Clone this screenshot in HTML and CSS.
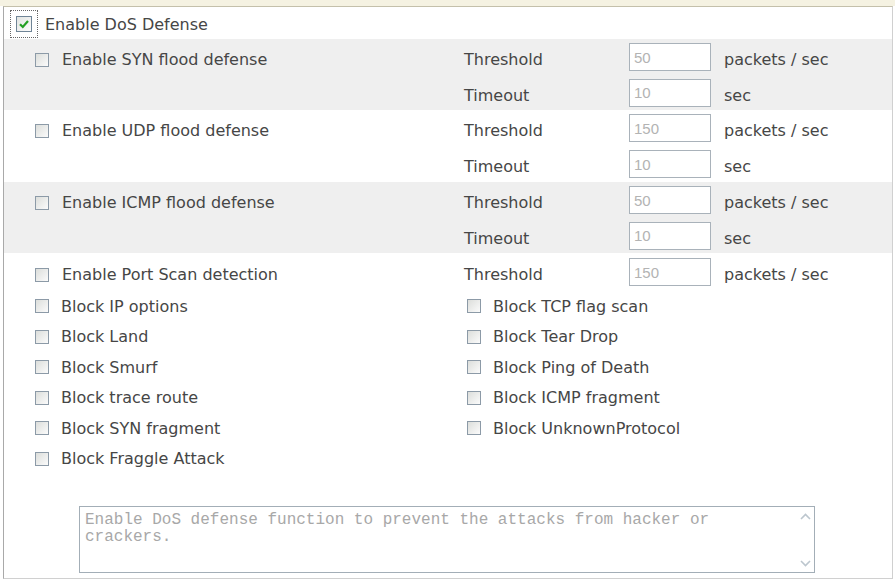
FILE: index.html
```html
<!DOCTYPE html>
<html lang="en">
<head>
  <meta charset="UTF-8">
  <title>DoS defense Setup</title>
  <link rel="stylesheet" href="styles.css">
</head>
<body>

<div class="top"></div>

<div class="panel">
  <label class="main">
    <span class="focus"><span class="cb on"><svg width="14" height="14" viewBox="0 0 14 14"><path d="M3 7.2 L5.8 10 L11 4" fill="none" stroke="#24a024" stroke-width="2.2"/></svg></span></span>
    Enable DoS Defense
  </label>

  <div class="group shade">
    <div class="prow">
      <label class="opt"><span class="cb"></span>Enable SYN flood defense</label>
      <span class="plabel">Threshold</span><input class="field" value="50"><span class="unit">packets / sec</span>
    </div>
    <div class="prow short">
      <span></span>
      <span class="plabel">Timeout</span><input class="field" value="10"><span class="unit">sec</span>
    </div>
  </div>

  <div class="group">
    <div class="prow">
      <label class="opt"><span class="cb"></span>Enable UDP flood defense</label>
      <span class="plabel">Threshold</span><input class="field" value="150"><span class="unit">packets / sec</span>
    </div>
    <div class="prow">
      <span></span>
      <span class="plabel">Timeout</span><input class="field" value="10"><span class="unit">sec</span>
    </div>
  </div>

  <div class="group shade">
    <div class="prow">
      <label class="opt"><span class="cb"></span>Enable ICMP flood defense</label>
      <span class="plabel">Threshold</span><input class="field" value="50"><span class="unit">packets / sec</span>
    </div>
    <div class="prow short">
      <span></span>
      <span class="plabel">Timeout</span><input class="field" value="10"><span class="unit">sec</span>
    </div>
  </div>

  <div class="prow port">
    <label class="opt"><span class="cb"></span>Enable Port Scan detection</label>
    <span class="plabel">Threshold</span><input class="field" value="150"><span class="unit">packets / sec</span>
  </div>

  <div class="blocks">
    <label><span class="cb"></span>Block IP options</label>
    <label><span class="cb"></span>Block TCP flag scan</label>
    <label><span class="cb"></span>Block Land</label>
    <label><span class="cb"></span>Block Tear Drop</label>
    <label><span class="cb"></span>Block Smurf</label>
    <label><span class="cb"></span>Block Ping of Death</label>
    <label><span class="cb"></span>Block trace route</label>
    <label><span class="cb"></span>Block ICMP fragment</label>
    <label><span class="cb"></span>Block SYN fragment</label>
    <label><span class="cb"></span>Block UnknownProtocol</label>
    <label><span class="cb"></span>Block Fraggle Attack</label>
  </div>

  <div class="note">
    <div class="note-text">Enable DoS defense function to prevent the attacks from hacker or crackers.</div>
    <div class="scroll">
      <svg width="11" height="7" viewBox="0 0 11 7"><path d="M1 6 L5.5 1.5 L10 6" fill="none" stroke="#bcc6ce" stroke-width="1.6"/></svg>
      <svg width="11" height="7" viewBox="0 0 11 7"><path d="M1 1 L5.5 5.5 L10 1" fill="none" stroke="#bcc6ce" stroke-width="1.6"/></svg>
    </div>
  </div>
</div>

</body>
</html>
```

FILE: styles.css
```css
body { margin: 0; width: 895px; background: #fff; color: #464646; font-family: "DejaVu Sans", Verdana, sans-serif; font-size: 16px; }
.top { height: 6px; background: #f5f2e2; }

.panel { margin: 0 2px 0 3px; border: 1px solid #d0d0d0; border-top-color: #c4c0ab; border-left-color: #a9a9a9; padding-bottom: 5px; }

.main { height: 32px; box-sizing: border-box; display: flex; align-items: center; gap: 7px; padding: 2px 0 0 6px; }
.focus { width: 28px; height: 28px; box-sizing: border-box; border: 1px dotted #666; display: flex; align-items: center; justify-content: center; }

.cb { flex: none; width: 14px; height: 14px; box-sizing: border-box; border: 1px solid #8c9aa7; background: linear-gradient(135deg, #dcdedb, #fbfbfb); }
.cb.on { width: 16px; height: 16px; border-color: #6f8496; display: flex; align-items: center; justify-content: center; background: linear-gradient(135deg, #e2e5e2, #fcfcfc); }

.shade { background: #efefef; }
.prow { height: 36px; display: grid; grid-template-columns: 460px 165px 82px auto; align-items: center; }
.prow.short { height: 35px; }
.prow.port { height: 38px; }
.opt { display: flex; align-items: center; gap: 13px; padding: 5px 0 0 31px; }
.plabel, .unit { padding-top: 5px; }
.unit { padding-left: 13px; }
.field { width: 82px; height: 28px; box-sizing: border-box; margin: 0; border: 1px solid #a9b2ba; padding: 0 4px; background: #fff; color: #b3b3b3; font-family: "Liberation Sans", Arial, sans-serif; font-size: 15px; }

.blocks { display: grid; grid-template-columns: 463px auto; grid-auto-rows: 30.5px; align-items: center; }
.blocks label { display: flex; align-items: center; gap: 12px; }
.blocks label:nth-child(odd) { padding-left: 31px; }

.note { margin: 32px 0 0 75px; width: 736px; height: 67px; box-sizing: border-box; border: 1px solid #a3aeb7; display: flex; }
.note-text { flex: 1; padding: 5px 10px 0 5px; color: #a8a8a8; font-family: "Liberation Mono", "Courier New", monospace; font-size: 16px; line-height: 17px; }
.scroll { width: 17px; display: flex; flex-direction: column; justify-content: space-between; align-items: center; padding: 6px 0 5px; }
```
